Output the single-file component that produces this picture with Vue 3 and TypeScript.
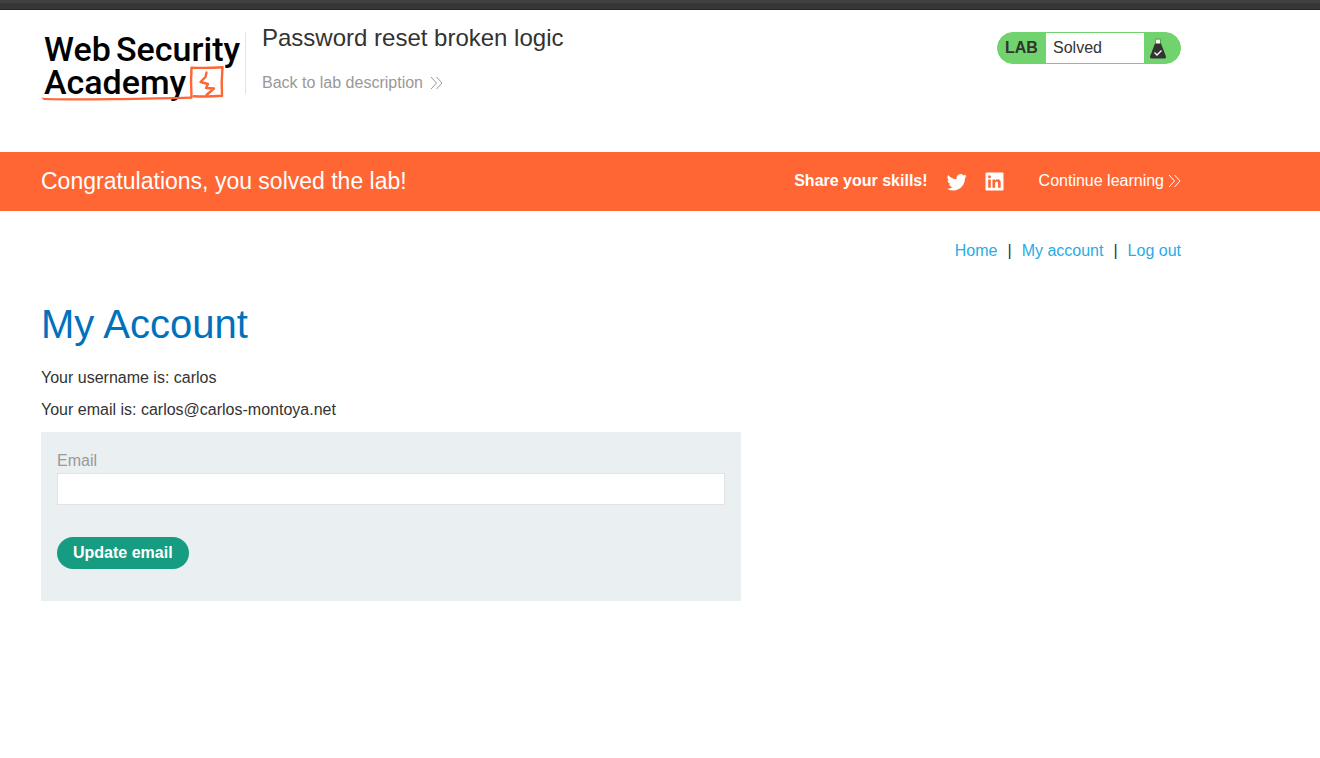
<script setup lang="ts">
import { ref } from 'vue'

interface NavLink {
  label: string
  href: string
}

const labTitle = 'Password reset broken logic'
const username = 'carlos'
const currentEmail = 'carlos@carlos-montoya.net'
const links: NavLink[] = [
  { label: 'Home', href: '#home' },
  { label: 'My account', href: '#my-account' },
  { label: 'Log out', href: '#logout' },
]
const email = ref('')
</script>

<template>
  <div class="page">
    <div class="top-strip"></div>

    <header class="container lab-header">
      <a class="logo" href="#academy" aria-label="Web Security Academy">
        <svg width="204" height="76" viewBox="0 0 204 76">
          <g class="logo-text">
            <text x="3" y="37">Web</text>
            <text x="75" y="37">Security</text>
            <text x="3" y="70">Academy</text>
          </g>
          <g fill="none" stroke="#ff6633" stroke-linejoin="round" stroke-linecap="round">
            <path d="M3 75Q30 75.800 70 75.200Q120 74.400 150 73.600" stroke-width="2.200" />
            <path d="M1 74.200L12 75.500" stroke-width="1" />
            <path d="M150.500 73.600Q149.600 58 150.500 43.600Q165 44.400 181.500 43.200Q180.200 58 181 71.800Q166 73 153 72.200" stroke-width="2.400" />
            <path d="M165.500 48.500L164.500 53L159.500 58L167 60L165 64L173 64.500L165.500 71" stroke-width="2.400" />
          </g>
        </svg>
      </a>
      <div class="title-block">
        <h2>{{ labTitle }}</h2>
        <a class="back" href="#lab">
          Back to lab description
          <svg width="13" height="14" viewBox="0 0 13 14" fill="none" stroke="currentColor">
            <path d="M1 1L6.500 7L1 13M6.500 1L12 7L6.500 13" />
          </svg>
        </a>
      </div>
      <div class="status">
        <span class="status-tag">LAB</span>
        <p class="status-text">Solved</p>
        <svg class="flask" width="16" height="21" viewBox="0 0 16 21">
          <path d="M6 1.500H10V6H6Z" fill="#fff" />
          <path d="M5 .5H11V1.500H5Z" fill="#55a653" />
          <path d="M5.500 1.500V6M10.500 1.500V6" stroke="#55a653" fill="none" />
          <path d="M5 5.500H11L15.900 18.200Q16.300 20.500 14.500 20.500H1.500Q-.3 20.500 .1 18.200Z" fill="#333332" />
          <path d="M4.500 14.500L7 17L11.500 12.500" fill="none" stroke="#fff" stroke-width="1.300" />
        </svg>
      </div>
    </header>

    <section class="banner">
      <div class="container banner-inner">
        <h4>Congratulations, you solved the lab!</h4>
        <div class="share">
          <span class="share-label">Share your skills!</span>
          <a class="social" href="#twitter" aria-label="Share on Twitter">
            <svg width="20" height="20" viewBox="0 0 24 24" fill="#fff">
              <path d="M23.600 4.900a9.600 9.600 0 0 1-2.800.8 4.800 4.800 0 0 0 2.200-2.700 9.800 9.800 0 0 1-3.100 1.200 4.900 4.900 0 0 0-8.400 4.500A13.900 13.900 0 0 1 1.400 3.600a4.900 4.900 0 0 0 1.500 6.600 4.900 4.900 0 0 1-2.200-.6v.1a4.900 4.900 0 0 0 3.900 4.800 4.900 4.900 0 0 1-2.200.1 4.900 4.900 0 0 0 4.600 3.400A9.900 9.900 0 0 1 0 20a13.900 13.900 0 0 0 7.500 2.200c9.100 0 14-7.500 14-14v-.6a10 10 0 0 0 2.100-2.700z" />
            </svg>
          </a>
          <a class="social linkedin" href="#linkedin" aria-label="Share on LinkedIn">
            <svg width="19" height="19" viewBox="0 0 19 19">
              <rect x=".5" y=".5" width="18" height="18" rx="1.200" fill="#fff" />
              <g fill="#ff6633">
                <circle cx="4.500" cy="4.800" r="1.500" />
                <path d="M3.200 7.400H5.800V15.700H3.200ZM7.500 7.400H10V8.600Q11 7.200 12.700 7.200Q15.700 7.200 15.700 10.900V15.700H13.100V11.400Q13.100 9.500 11.800 9.500Q10.100 9.500 10.100 11.500V15.700H7.500Z" />
              </g>
            </svg>
          </a>
          <a class="continue" href="#next">
            Continue learning
            <svg width="13" height="14" viewBox="0 0 13 14" fill="none" stroke="currentColor">
              <path d="M1 1L6.500 7L1 13M6.500 1L12 7L6.500 13" />
            </svg>
          </a>
        </div>
      </div>
    </section>

    <main class="container">
      <nav class="account-nav">
        <template v-for="(link, i) in links" :key="link.href">
          <span v-if="i > 0">|</span>
          <a :href="link.href">{{ link.label }}</a>
        </template>
      </nav>

      <h1>My Account</h1>
      <p>Your username is: {{ username }}</p>
      <p>Your email is: {{ currentEmail }}</p>

      <form class="email-form" @submit.prevent>
        <label for="email">Email</label>
        <input id="email" v-model="email" type="email" required />
        <button type="submit">Update email</button>
      </form>
    </main>
  </div>
</template>

<style>
body {
  margin: 0;
  background: #fff;
}
</style>

<style scoped>
.page {
  font: 16px/24px "Liberation Sans", Arial, sans-serif;
  color: #333332;
}
.page * {
  box-sizing: border-box;
}
a {
  text-decoration: none;
}
h1,
h2,
h4,
p {
  margin: 0;
  font-weight: 400;
}
.container {
  max-width: 1181px;
  padding-left: 41px;
}
.top-strip {
  height: 10px;
  background: linear-gradient(#404040 0 3px, #363636 3px 9px, #262626 9px);
}
.lab-header {
  display: flex;
  align-items: flex-start;
  padding-top: 14px;
  padding-bottom: 52px;
}
.logo {
  display: flex;
}
.logo svg {
  overflow: visible;
}
.logo-text {
  font: 500 34px "Roboto", sans-serif;
  fill: #000;
}
.title-block {
  height: 62px;
  margin-top: 8px;
  padding-left: 16px;
  border-left: 1px solid #e3e3e3;
}
.title-block h2 {
  margin-top: -8px;
  font-size: 24px;
  line-height: 28px;
}
.back {
  display: flex;
  align-items: center;
  gap: 7px;
  margin-top: 19px;
  color: #999;
}
.status {
  display: flex;
  align-items: center;
  width: 184px;
  height: 32px;
  margin: 8px 0 0 auto;
  border: 1px solid #70d36d;
  border-radius: 16px;
  background: #70d36d;
}
.status-tag {
  width: 48px;
  padding-left: 7px;
  font-weight: 700;
}
.status-text {
  width: 98px;
  padding: 3px 7px;
  background: #fff;
}
.flask {
  margin-left: 6px;
}
.banner {
  background: #ff6633;
  color: #fff;
}
.banner-inner {
  display: flex;
  align-items: center;
  justify-content: space-between;
  min-height: 59px;
  padding-bottom: 2px;
}
.banner h4 {
  font-size: 23px;
}
.share {
  display: flex;
  align-items: center;
}
.share a {
  display: flex;
  align-items: center;
  color: #fff;
}
.share .social {
  padding-top: 2px;
}
.share-label {
  margin-right: 19px;
  font-weight: 700;
}
.share .linkedin {
  margin: 0 35px 0 18px;
}
.continue {
  gap: 4px;
}
.account-nav {
  display: flex;
  justify-content: flex-end;
  gap: 10px;
  padding-top: 28px;
}
.account-nav a {
  color: #29abe6;
}
h1 {
  margin: 37px 0 18px;
  color: #0071bc;
  font-size: 40px;
  line-height: 48px;
}
p + p {
  margin-top: 8px;
}
.email-form {
  display: flex;
  flex-direction: column;
  align-items: flex-start;
  max-width: 700px;
  margin-top: 10px;
  padding: 17px 16px 32px;
  background: #eaf0f2;
}
label {
  color: #999;
}
input {
  width: 100%;
  height: 32px;
  padding: 0 8px;
  border: 1px solid #e3e3e3;
  background: #fff;
  font: inherit;
}
button {
  height: 32px;
  margin-top: 32px;
  padding: 0 16px;
  border: 0;
  border-radius: 16px;
  background: #169c80;
  color: #fff;
  font: inherit;
  font-weight: 700;
}
</style>
